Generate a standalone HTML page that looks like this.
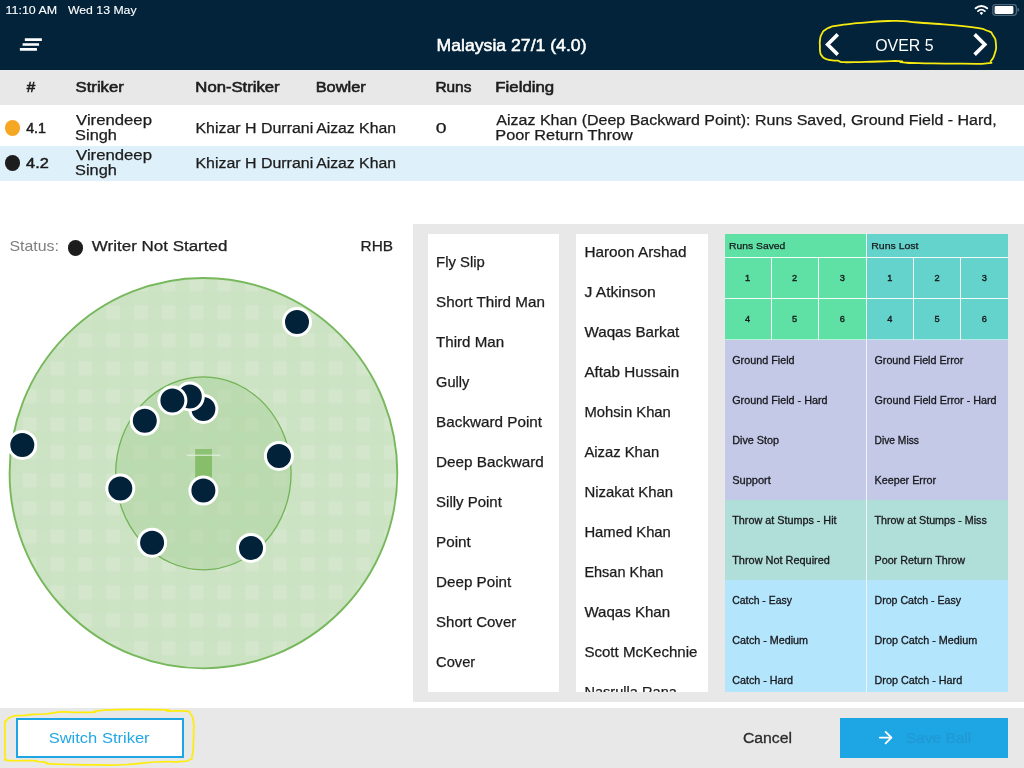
<!DOCTYPE html>
<html><head><meta charset="utf-8"><title>Fielding</title>
<style>
html,body{margin:0;padding:0;}
body{width:1024px;height:768px;position:relative;overflow:hidden;background:#fff;font-family:"Liberation Sans",sans-serif;}
.abs{position:absolute;}
#hdr{left:0;top:0;width:1024px;height:70px;background:#022339;}
#thead{left:0;top:70px;width:1024px;height:34.6px;background:#e8e8e8;}
#row2{left:0;top:145.6px;width:1024px;height:35px;background:#def0fa;}
.dot{position:absolute;border-radius:50%;}
#panel{left:413px;top:224px;width:611px;height:478px;background:#e8e8e8;}
.col{position:absolute;top:234px;height:458px;background:#fff;}
#bbar{left:0;top:708px;width:1024px;height:60px;background:#e8e8e8;}
#sw{left:16px;top:718px;width:164px;height:36px;border:2px solid #1ea5e3;background:#fff;}
#save{left:840px;top:718px;width:168px;height:40px;background:#1ea5e3;}
.g{position:absolute;}
#texts{position:absolute;left:0;top:0;width:1024px;height:768px;will-change:transform;font-family:"Liberation Sans",sans-serif;}
#texts text{white-space:pre;}

</style></head>
<body>
<div id="hdr" class="abs"></div>
<div id="thead" class="abs"></div>
<div id="row2" class="abs"></div>
<div class="dot" style="left:4.9px;top:119.9px;width:15.4px;height:15.9px;background:#f5a623;"></div>
<div class="dot" style="left:4.9px;top:154.8px;width:15.4px;height:15.9px;background:#1d1d1d;"></div>
<div class="dot" style="left:67.7px;top:240.1px;width:15.5px;height:15.5px;background:#1d1d1d;"></div>
<div id="panel" class="abs"></div>
<div class="col" style="left:428px;width:131px;"></div>
<div class="col" style="left:576px;width:132px;"></div>
<!-- action grid -->
<div class="g" style="left:725px;top:234px;width:141px;height:106px;background:#5fe0a4;"></div>
<div class="g" style="left:867px;top:234px;width:140.8px;height:106px;background:#63d3cb;"></div>
<div class="g" style="left:725px;top:340px;width:282.8px;height:160px;background:#c5c9e8;"></div>
<div class="g" style="left:725px;top:500px;width:282.8px;height:80px;background:#b0ded9;"></div>
<div class="g" style="left:725px;top:580px;width:282.8px;height:111.8px;background:#b3e5fc;"></div>
<div class="g" style="left:725px;top:257px;width:283px;height:1px;background:#f4fbf8;"></div>
<div class="g" style="left:725px;top:298px;width:283px;height:1px;background:#f4fbf8;"></div>
<div class="g" style="left:725px;top:339px;width:283px;height:1px;background:#f4fbf8;opacity:.6"></div>
<div class="g" style="left:771px;top:258px;width:1px;height:82px;background:#f4fbf8;"></div>
<div class="g" style="left:818px;top:258px;width:1px;height:82px;background:#f4fbf8;"></div>
<div class="g" style="left:913px;top:258px;width:1px;height:82px;background:#f4fbf8;"></div>
<div class="g" style="left:960px;top:258px;width:1px;height:82px;background:#f4fbf8;"></div>
<div class="g" style="left:866px;top:234px;width:1px;height:458px;background:#f1f5f7;"></div>
<div id="bbar" class="abs"></div>
<div id="sw" class="abs"></div>
<div id="save" class="abs"></div>
<svg class="abs" style="left:0;top:0" width="1024" height="768" viewBox="0 0 1024 768">
<defs>
<clipPath id="oc"><ellipse cx="203.45" cy="473.2" rx="194" ry="195.4"/></clipPath>
<pattern id="vs" x="22.8" y="277.5" width="27.8" height="28" patternUnits="userSpaceOnUse">
<rect x="0" y="0" width="13.7" height="28" fill="#fff" fill-opacity=".022"/>
<rect x="0" y="0" width="27.8" height="13.7" fill="#fff" fill-opacity=".022"/>
<rect x="0" y="0" width="13.7" height="13.7" fill="#fff" fill-opacity=".13"/>
</pattern>
</defs>
<!-- field -->
<ellipse cx="203.45" cy="473.2" rx="194" ry="195.4" fill="#cbe2c3"/>
<g clip-path="url(#oc)"><rect x="7" y="276" width="394" height="396" fill="url(#vs)"/></g>
<ellipse cx="203.45" cy="473.2" rx="193.85" ry="195.2" fill="none" stroke="#77b85c" stroke-width="1.9"/>
<ellipse cx="203.4" cy="473.3" rx="87.7" ry="96.5" fill="#a9d29b" fill-opacity=".5" stroke="#72b456" stroke-width="1.3"/>
<rect x="195.2" y="449" width="16.8" height="30" fill="#86be69"/>
<rect x="195.2" y="449" width="16.8" height="5.7" fill="#fff" fill-opacity=".07"/>
<rect x="186.7" y="454.7" width="33.6" height="1" fill="#e9f3e4"/>
<!-- fielders -->
<g fill="#022239" stroke="#fff" stroke-width="3">
<circle cx="297" cy="322" r="13.5"/>
<circle cx="22.3" cy="444.9" r="13.5"/>
<circle cx="203.4" cy="409" r="13.5"/>
<circle cx="189.8" cy="396.5" r="13.5"/>
<circle cx="172.4" cy="400.5" r="13.5"/>
<circle cx="144.8" cy="420.8" r="13.5"/>
<circle cx="278.9" cy="455.9" r="13.5"/>
<circle cx="120.3" cy="488.5" r="13.5"/>
<circle cx="203.4" cy="490.6" r="13.5"/>
<circle cx="152.1" cy="542.7" r="13.5"/>
<circle cx="251" cy="547.9" r="13.5"/>
</g>
<!-- hamburger -->
<g fill="#fff">
<rect x="24.8" y="38.3" width="17.1" height="2.6" rx=".3"/>
<rect x="22.6" y="43.2" width="16.5" height="2.6" rx=".3"/>
<rect x="19.9" y="48.1" width="17.1" height="2.6" rx=".3"/>
</g>
<!-- chevrons -->
<g fill="none" stroke="#fff" stroke-width="3.6" stroke-linejoin="miter">
<path d="M837.8 34.4 L827.6 44.5 L837.8 54.6"/>
<path d="M974.6 34.4 L984.8 44.5 L974.6 54.6"/>
</g>
<!-- yellow scribbles -->
<path d="M820.0 40.0 C819.4 44.0 819.8 42.0 819.9 46.0 C820.0 50.0 819.6 48.9 820.2 52.1 C820.8 55.3 820.4 53.6 821.8 55.7 C823.2 57.8 822.3 57.0 824.4 58.3 C826.5 59.6 825.4 58.9 828.0 59.6 C830.6 60.3 828.9 60.0 832.2 60.4 C835.5 60.8 835.3 60.3 837.9 60.7 C840.5 61.1 837.9 61.2 840.0 61.7 C842.1 62.2 839.3 62.1 844.2 62.2 C849.1 62.3 843.0 62.3 854.6 62.1 C866.2 61.9 864.1 61.8 879.0 61.5 C893.9 61.2 891.4 60.8 899.4 61.1 C907.4 61.4 894.5 61.7 903.1 62.4 C911.7 63.1 905.5 62.9 925.3 63.3 C945.1 63.7 942.1 63.7 962.5 63.7 C982.9 63.7 977.0 64.4 986.6 63.3 C996.2 62.2 988.4 63.9 991.2 60.5 C994.0 57.1 993.3 58.7 994.9 53.1 C996.5 47.5 996.5 49.7 995.9 43.8 C995.3 37.9 996.2 39.9 993.1 35.5 C990.0 31.1 993.7 33.3 986.6 30.5 C979.5 27.7 985.9 29.1 971.7 27.1 C957.5 25.1 961.8 25.9 943.9 24.4 C926.0 22.9 931.5 23.6 917.9 22.5 C904.3 21.4 913.0 21.7 903.1 21.2 C893.2 20.7 899.3 20.7 888.2 21.0 C877.1 21.3 882.1 21.2 869.7 22.1 C857.3 23.0 862.4 22.6 851.1 23.8 C839.8 25.0 842.6 24.7 835.8 25.8 C829.0 26.9 834.1 25.8 830.6 27.1 C827.1 28.4 828.3 27.4 825.4 29.7 C822.5 32.0 823.6 30.5 821.8 33.9 C820.0 37.3 820.6 36.0 820.0 40.0 Z" fill="none" stroke="#f7ea10" stroke-width="1.8" stroke-linejoin="round"/>
<path d="M5.0 724.0 C5.3 717.8 4.7 723.3 5.8 721.5 C6.9 719.7 6.1 720.3 8.3 718.6 C10.5 716.9 9.7 717.5 12.5 716.5 C15.3 715.5 12.5 716.1 16.7 715.7 C20.9 715.3 19.5 715.7 25.0 715.3 C30.5 714.9 26.4 714.8 33.3 714.4 C40.2 714.0 38.8 714.5 45.8 714.0 C52.8 713.5 48.4 713.5 54.2 712.8 C60.0 712.0 55.3 712.0 63.3 711.9 C71.3 711.8 67.9 712.2 78.1 712.3 C88.3 712.4 87.9 712.6 93.8 712.2 C99.7 711.8 90.5 711.8 95.7 711.0 C100.9 710.2 95.7 710.5 109.4 709.9 C123.1 709.3 117.8 709.3 136.7 709.3 C155.6 709.3 155.6 709.3 166.0 709.9 C176.4 710.5 161.5 710.6 168.0 711.0 C174.5 711.4 178.0 710.3 185.5 711.2 C193.0 712.1 187.8 710.3 190.4 713.8 C193.0 717.3 192.3 715.2 193.4 721.6 C194.5 728.0 193.6 725.8 193.6 733.0 C193.6 740.2 193.8 735.8 193.4 743.1 C193.0 750.4 193.7 749.3 192.4 754.8 C191.1 760.3 193.7 757.4 189.5 759.7 C185.3 762.0 190.8 760.8 179.7 761.6 C168.6 762.4 173.9 761.0 156.3 762.0 C138.7 763.0 146.5 763.5 127.0 764.5 C107.5 765.5 117.2 764.9 97.7 764.9 C78.2 764.9 79.9 764.7 68.4 764.5 C56.9 764.3 70.0 764.7 63.3 764.4 C56.6 764.1 54.1 764.3 48.3 763.6 C42.5 762.9 49.4 763.0 45.8 762.3 C42.2 761.6 41.7 762.0 37.5 761.5 C33.3 761.0 41.6 761.0 33.3 760.7 C25.0 760.4 21.1 760.9 12.5 760.7 C3.9 760.6 9.9 761.0 7.5 760.2 C5.1 759.5 6.2 759.6 5.4 758.6 C4.6 757.6 5.2 763.5 5.0 757.3 C4.8 751.1 4.9 751.1 4.9 740.0 C4.9 728.9 4.7 730.2 5.0 724.0 Z" fill="none" stroke="#fdec0c" stroke-width="1.7" stroke-linejoin="round"/>
<!-- wifi -->
<g fill="none" stroke="#fff" stroke-width="1.9" stroke-linecap="round">
<path d="M975.6 8.3 A8.6 8.6 0 0 1 987.2 8.3"/>
<path d="M978 11.1 A5 5 0 0 1 984.8 11.1"/>
</g>
<path d="M979.6 12.9 L981.4 15 L983.2 12.9 A2.6 2.6 0 0 0 979.6 12.9Z" fill="#fff"/>
<!-- battery -->
<rect x="992.8" y="4.7" width="23.6" height="10.6" rx="2.8" fill="none" stroke="#4e667a" stroke-width="1.3"/>
<rect x="994.6" y="6.1" width="18.8" height="7.8" rx="1.3" fill="#fff"/>
<path d="M1017.3 7.8 C1018.8 8.3 1019.3 9.1 1019.3 9.85 C1019.3 10.6 1018.8 11.4 1017.3 11.9Z" fill="#4e667a"/>
<!-- save arrow -->
<g fill="none" stroke="#fff" stroke-width="1.85" stroke-linecap="round" stroke-linejoin="round">
<path d="M879.8 737.6 H891"/><path d="M885.6 731.9 L891.4 737.6 L885.6 743.3"/>
</g>
</svg>

<svg id="texts" width="1024" height="768" viewBox="0 0 1024 768" xml:space="preserve">
<text x="5.50" y="14" font-size="11.6" fill="#fff" stroke="#fff" stroke-width="0.12" textLength="51.67" lengthAdjust="spacingAndGlyphs">11:10 AM</text>
<text x="67.96" y="14" font-size="11.6" fill="#fff" stroke="#fff" stroke-width="0.12" textLength="68.60" lengthAdjust="spacingAndGlyphs">Wed 13 May</text>
<text x="436.55" y="51" font-size="16.5" fill="#fff" stroke="#fff" stroke-width="0.5" textLength="149.97" lengthAdjust="spacingAndGlyphs">Malaysia 27/1 (4.0)</text>
<text x="875.18" y="51" font-size="16.8" fill="#fff" textLength="58.30" lengthAdjust="spacingAndGlyphs">OVER 5</text>
<text x="26.81" y="92" font-size="14" fill="#1c1c1c" stroke="#1c1c1c" stroke-width="0.55" textLength="8.46" lengthAdjust="spacingAndGlyphs">#</text>
<text x="75.63" y="92" font-size="14" fill="#1c1c1c" stroke="#1c1c1c" stroke-width="0.55" textLength="48.10" lengthAdjust="spacingAndGlyphs">Striker</text>
<text x="195.35" y="92" font-size="14" fill="#1c1c1c" stroke="#1c1c1c" stroke-width="0.55" textLength="84.34" lengthAdjust="spacingAndGlyphs">Non-Striker</text>
<text x="315.73" y="92" font-size="14" fill="#1c1c1c" stroke="#1c1c1c" stroke-width="0.55" textLength="49.97" lengthAdjust="spacingAndGlyphs">Bowler</text>
<text x="435.40" y="92" font-size="14" fill="#1c1c1c" stroke="#1c1c1c" stroke-width="0.55" textLength="35.96" lengthAdjust="spacingAndGlyphs">Runs</text>
<text x="495.34" y="92" font-size="14" fill="#1c1c1c" stroke="#1c1c1c" stroke-width="0.55" textLength="58.80" lengthAdjust="spacingAndGlyphs">Fielding</text>
<text x="26.19" y="133" font-size="14" fill="#1c1c1c" stroke="#1c1c1c" stroke-width="0.5" textLength="19.79" lengthAdjust="spacingAndGlyphs">4.1</text>
<text x="26.09" y="168" font-size="14" fill="#1c1c1c" stroke="#1c1c1c" stroke-width="0.5" textLength="22.64" lengthAdjust="spacingAndGlyphs">4.2</text>
<text x="76.05" y="125" font-size="14" fill="#1c1c1c" stroke="#1c1c1c" stroke-width="0.25" textLength="75.91" lengthAdjust="spacingAndGlyphs">Virendeep</text>
<text x="75.11" y="140" font-size="14" fill="#1c1c1c" stroke="#1c1c1c" stroke-width="0.25" textLength="41.77" lengthAdjust="spacingAndGlyphs">Singh</text>
<text x="195.46" y="133" font-size="14" fill="#1c1c1c" stroke="#1c1c1c" stroke-width="0.25" textLength="117.75" lengthAdjust="spacingAndGlyphs">Khizar H Durrani</text>
<text x="316.24" y="133" font-size="14" fill="#1c1c1c" stroke="#1c1c1c" stroke-width="0.25" textLength="79.68" lengthAdjust="spacingAndGlyphs">Aizaz Khan</text>
<text x="76.05" y="160" font-size="14" fill="#1c1c1c" stroke="#1c1c1c" stroke-width="0.25" textLength="75.91" lengthAdjust="spacingAndGlyphs">Virendeep</text>
<text x="75.10" y="175" font-size="14" fill="#1c1c1c" stroke="#1c1c1c" stroke-width="0.25" textLength="41.77" lengthAdjust="spacingAndGlyphs">Singh</text>
<text x="195.45" y="168" font-size="14" fill="#1c1c1c" stroke="#1c1c1c" stroke-width="0.25" textLength="117.75" lengthAdjust="spacingAndGlyphs">Khizar H Durrani</text>
<text x="316.24" y="168" font-size="14" fill="#1c1c1c" stroke="#1c1c1c" stroke-width="0.25" textLength="79.68" lengthAdjust="spacingAndGlyphs">Aizaz Khan</text>
<text x="435.74" y="133" font-size="14" fill="#1c1c1c" stroke="#1c1c1c" stroke-width="0.25" textLength="10.80" lengthAdjust="spacingAndGlyphs">0</text>
<text x="496.38" y="125" font-size="14" fill="#1c1c1c" stroke="#1c1c1c" stroke-width="0.25" textLength="500.28" lengthAdjust="spacingAndGlyphs">Aizaz Khan (Deep Backward Point): Runs Saved, Ground Field - Hard,</text>
<text x="495.39" y="140" font-size="14" fill="#1c1c1c" stroke="#1c1c1c" stroke-width="0.25" textLength="137.35" lengthAdjust="spacingAndGlyphs">Poor Return Throw</text>
<text x="9.46" y="251" font-size="14.5" fill="#7e7e7e" textLength="49.48" lengthAdjust="spacingAndGlyphs">Status:</text>
<text x="91.88" y="251" font-size="14" fill="#222" stroke="#222" stroke-width="0.25" textLength="135.50" lengthAdjust="spacingAndGlyphs">Writer Not Started</text>
<text x="360.56" y="251" font-size="14" fill="#222" stroke="#222" stroke-width="0.25" textLength="32.48" lengthAdjust="spacingAndGlyphs">RHB</text>
<text x="436.10" y="267" font-size="14.2" fill="#1c1c1c" stroke="#1c1c1c" stroke-width="0.25" textLength="48.74" lengthAdjust="spacingAndGlyphs">Fly Slip</text>
<text x="436.10" y="307" font-size="14.2" fill="#1c1c1c" stroke="#1c1c1c" stroke-width="0.25" textLength="108.77" lengthAdjust="spacingAndGlyphs">Short Third Man</text>
<text x="436.10" y="347" font-size="14.2" fill="#1c1c1c" stroke="#1c1c1c" stroke-width="0.25" textLength="68.00" lengthAdjust="spacingAndGlyphs">Third Man</text>
<text x="436.10" y="387" font-size="14.2" fill="#1c1c1c" stroke="#1c1c1c" stroke-width="0.25" textLength="33.20" lengthAdjust="spacingAndGlyphs">Gully</text>
<text x="436.10" y="427" font-size="14.2" fill="#1c1c1c" stroke="#1c1c1c" stroke-width="0.25" textLength="105.99" lengthAdjust="spacingAndGlyphs">Backward Point</text>
<text x="436.10" y="467" font-size="14.2" fill="#1c1c1c" stroke="#1c1c1c" stroke-width="0.25" textLength="107.76" lengthAdjust="spacingAndGlyphs">Deep Backward</text>
<text x="436.10" y="507" font-size="14.2" fill="#1c1c1c" stroke="#1c1c1c" stroke-width="0.25" textLength="65.73" lengthAdjust="spacingAndGlyphs">Silly Point</text>
<text x="436.10" y="547" font-size="14.2" fill="#1c1c1c" stroke="#1c1c1c" stroke-width="0.25" textLength="34.72" lengthAdjust="spacingAndGlyphs">Point</text>
<text x="436.10" y="587" font-size="14.2" fill="#1c1c1c" stroke="#1c1c1c" stroke-width="0.25" textLength="75.06" lengthAdjust="spacingAndGlyphs">Deep Point</text>
<text x="436.10" y="627" font-size="14.2" fill="#1c1c1c" stroke="#1c1c1c" stroke-width="0.25" textLength="80.15" lengthAdjust="spacingAndGlyphs">Short Cover</text>
<text x="436.10" y="667" font-size="14.2" fill="#1c1c1c" stroke="#1c1c1c" stroke-width="0.25" textLength="39.16" lengthAdjust="spacingAndGlyphs">Cover</text>
<text x="584.40" y="257" font-size="14.2" fill="#1c1c1c" stroke="#1c1c1c" stroke-width="0.25" textLength="102.14" lengthAdjust="spacingAndGlyphs">Haroon Arshad</text>
<text x="584.40" y="297" font-size="14.2" fill="#1c1c1c" stroke="#1c1c1c" stroke-width="0.25" textLength="71.41" lengthAdjust="spacingAndGlyphs">J Atkinson</text>
<text x="584.40" y="337" font-size="14.2" fill="#1c1c1c" stroke="#1c1c1c" stroke-width="0.25" textLength="94.94" lengthAdjust="spacingAndGlyphs">Waqas Barkat</text>
<text x="584.40" y="377" font-size="14.2" fill="#1c1c1c" stroke="#1c1c1c" stroke-width="0.25" textLength="94.86" lengthAdjust="spacingAndGlyphs">Aftab Hussain</text>
<text x="584.40" y="417" font-size="14.2" fill="#1c1c1c" stroke="#1c1c1c" stroke-width="0.25" textLength="86.46" lengthAdjust="spacingAndGlyphs">Mohsin Khan</text>
<text x="584.40" y="457" font-size="14.2" fill="#1c1c1c" stroke="#1c1c1c" stroke-width="0.25" textLength="74.83" lengthAdjust="spacingAndGlyphs">Aizaz Khan</text>
<text x="584.40" y="497" font-size="14.2" fill="#1c1c1c" stroke="#1c1c1c" stroke-width="0.25" textLength="88.60" lengthAdjust="spacingAndGlyphs">Nizakat Khan</text>
<text x="584.40" y="537" font-size="14.2" fill="#1c1c1c" stroke="#1c1c1c" stroke-width="0.25" textLength="86.46" lengthAdjust="spacingAndGlyphs">Hamed Khan</text>
<text x="584.40" y="577" font-size="14.2" fill="#1c1c1c" stroke="#1c1c1c" stroke-width="0.25" textLength="78.99" lengthAdjust="spacingAndGlyphs">Ehsan Khan</text>
<text x="584.40" y="617" font-size="14.2" fill="#1c1c1c" stroke="#1c1c1c" stroke-width="0.25" textLength="85.69" lengthAdjust="spacingAndGlyphs">Waqas Khan</text>
<text x="584.40" y="657" font-size="14.2" fill="#1c1c1c" stroke="#1c1c1c" stroke-width="0.25" textLength="113.07" lengthAdjust="spacingAndGlyphs">Scott McKechnie</text>
<text x="584.40" y="697" font-size="14.2" fill="#1c1c1c" stroke="#1c1c1c" stroke-width="0.25" textLength="92.48" lengthAdjust="spacingAndGlyphs">Nasrulla Rana</text>
<text x="729.03" y="249" font-size="9.8" fill="#18181c" stroke="#18181c" stroke-width="0.25" textLength="56.35" lengthAdjust="spacingAndGlyphs">Runs Saved</text>
<text x="871.21" y="249" font-size="9.8" fill="#18181c" stroke="#18181c" stroke-width="0.25" textLength="47.30" lengthAdjust="spacingAndGlyphs">Runs Lost</text>
<text x="745.03" y="281" font-size="9.6" fill="#18181c" stroke="#18181c" stroke-width="0.38" textLength="5.13" lengthAdjust="spacingAndGlyphs">1</text>
<text x="791.93" y="281" font-size="9.6" fill="#18181c" stroke="#18181c" stroke-width="0.38" textLength="5.13" lengthAdjust="spacingAndGlyphs">2</text>
<text x="839.73" y="281" font-size="9.6" fill="#18181c" stroke="#18181c" stroke-width="0.38" textLength="5.13" lengthAdjust="spacingAndGlyphs">3</text>
<text x="887.33" y="281" font-size="9.6" fill="#18181c" stroke="#18181c" stroke-width="0.38" textLength="5.13" lengthAdjust="spacingAndGlyphs">1</text>
<text x="934.53" y="281" font-size="9.6" fill="#18181c" stroke="#18181c" stroke-width="0.38" textLength="5.13" lengthAdjust="spacingAndGlyphs">2</text>
<text x="981.83" y="281" font-size="9.6" fill="#18181c" stroke="#18181c" stroke-width="0.38" textLength="5.13" lengthAdjust="spacingAndGlyphs">3</text>
<text x="745.03" y="322" font-size="9.6" fill="#18181c" stroke="#18181c" stroke-width="0.38" textLength="5.13" lengthAdjust="spacingAndGlyphs">4</text>
<text x="791.93" y="322" font-size="9.6" fill="#18181c" stroke="#18181c" stroke-width="0.38" textLength="5.13" lengthAdjust="spacingAndGlyphs">5</text>
<text x="839.73" y="322" font-size="9.6" fill="#18181c" stroke="#18181c" stroke-width="0.38" textLength="5.13" lengthAdjust="spacingAndGlyphs">6</text>
<text x="887.33" y="322" font-size="9.6" fill="#18181c" stroke="#18181c" stroke-width="0.38" textLength="5.13" lengthAdjust="spacingAndGlyphs">4</text>
<text x="934.53" y="322" font-size="9.6" fill="#18181c" stroke="#18181c" stroke-width="0.38" textLength="5.13" lengthAdjust="spacingAndGlyphs">5</text>
<text x="981.83" y="322" font-size="9.6" fill="#18181c" stroke="#18181c" stroke-width="0.38" textLength="5.13" lengthAdjust="spacingAndGlyphs">6</text>
<text x="732.20" y="364" font-size="10.3" fill="#18181c" stroke="#18181c" stroke-width="0.3" textLength="62.38" lengthAdjust="spacingAndGlyphs">Ground Field</text>
<text x="732.20" y="404" font-size="10.3" fill="#18181c" stroke="#18181c" stroke-width="0.3" textLength="95.38" lengthAdjust="spacingAndGlyphs">Ground Field - Hard</text>
<text x="732.20" y="444" font-size="10.3" fill="#18181c" stroke="#18181c" stroke-width="0.3" textLength="46.87" lengthAdjust="spacingAndGlyphs">Dive Stop</text>
<text x="732.20" y="484" font-size="10.3" fill="#18181c" stroke="#18181c" stroke-width="0.3" textLength="38.69" lengthAdjust="spacingAndGlyphs">Support</text>
<text x="732.20" y="524" font-size="10.3" fill="#18181c" stroke="#18181c" stroke-width="0.3" textLength="104.38" lengthAdjust="spacingAndGlyphs">Throw at Stumps - Hit</text>
<text x="732.20" y="564" font-size="10.3" fill="#18181c" stroke="#18181c" stroke-width="0.3" textLength="97.70" lengthAdjust="spacingAndGlyphs">Throw Not Required</text>
<text x="732.20" y="604" font-size="10.3" fill="#18181c" stroke="#18181c" stroke-width="0.3" textLength="59.74" lengthAdjust="spacingAndGlyphs">Catch - Easy</text>
<text x="732.20" y="644" font-size="10.3" fill="#18181c" stroke="#18181c" stroke-width="0.3" textLength="75.86" lengthAdjust="spacingAndGlyphs">Catch - Medium</text>
<text x="732.20" y="684" font-size="10.3" fill="#18181c" stroke="#18181c" stroke-width="0.3" textLength="60.87" lengthAdjust="spacingAndGlyphs">Catch - Hard</text>
<text x="874.50" y="364" font-size="10.3" fill="#18181c" stroke="#18181c" stroke-width="0.3" textLength="88.78" lengthAdjust="spacingAndGlyphs">Ground Field Error</text>
<text x="874.50" y="404" font-size="10.3" fill="#18181c" stroke="#18181c" stroke-width="0.3" textLength="122.10" lengthAdjust="spacingAndGlyphs">Ground Field Error - Hard</text>
<text x="874.50" y="444" font-size="10.3" fill="#18181c" stroke="#18181c" stroke-width="0.3" textLength="44.45" lengthAdjust="spacingAndGlyphs">Dive Miss</text>
<text x="874.50" y="484" font-size="10.3" fill="#18181c" stroke="#18181c" stroke-width="0.3" textLength="61.62" lengthAdjust="spacingAndGlyphs">Keeper Error</text>
<text x="874.50" y="524" font-size="10.3" fill="#18181c" stroke="#18181c" stroke-width="0.3" textLength="112.31" lengthAdjust="spacingAndGlyphs">Throw at Stumps - Miss</text>
<text x="874.50" y="564" font-size="10.3" fill="#18181c" stroke="#18181c" stroke-width="0.3" textLength="90.58" lengthAdjust="spacingAndGlyphs">Poor Return Throw</text>
<text x="874.50" y="604" font-size="10.3" fill="#18181c" stroke="#18181c" stroke-width="0.3" textLength="86.58" lengthAdjust="spacingAndGlyphs">Drop Catch - Easy</text>
<text x="874.50" y="644" font-size="10.3" fill="#18181c" stroke="#18181c" stroke-width="0.3" textLength="102.67" lengthAdjust="spacingAndGlyphs">Drop Catch - Medium</text>
<text x="874.50" y="684" font-size="10.3" fill="#18181c" stroke="#18181c" stroke-width="0.3" textLength="87.68" lengthAdjust="spacingAndGlyphs">Drop Catch - Hard</text>
<text x="48.68" y="743" font-size="15" fill="#22a7e4" textLength="100.92" lengthAdjust="spacingAndGlyphs">Switch Striker</text>
<text x="742.90" y="743" font-size="15.5" fill="#2a2a2a" stroke="#2a2a2a" stroke-width="0.3" textLength="49.12" lengthAdjust="spacingAndGlyphs">Cancel</text>
<text x="906.00" y="743" font-size="15.5" fill="#2198d2" stroke="#2198d2" stroke-width="0.1" textLength="65.20" lengthAdjust="spacingAndGlyphs">Save Ball</text>
</svg>
<div class="abs" style="left:570px;top:691.7px;width:145px;height:9.9px;background:#e8e8e8;"></div>
</body></html>
